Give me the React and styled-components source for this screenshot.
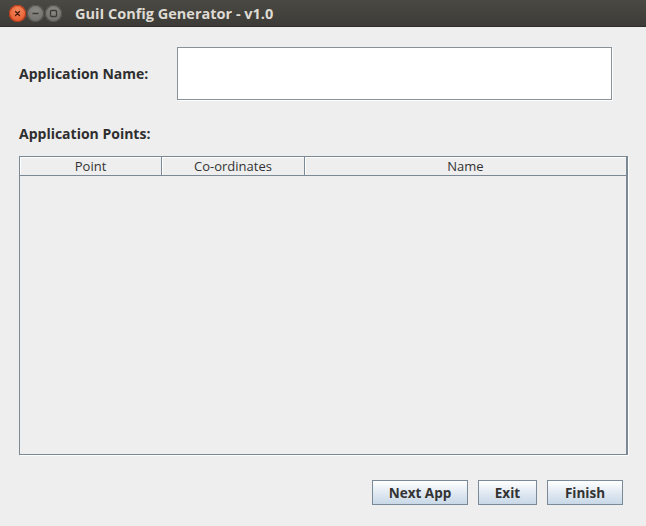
import React from 'react';
import styled, { createGlobalStyle } from 'styled-components';

const GlobalStyle = createGlobalStyle`
    html, body {
        margin: 0;
        padding: 0;
        background: #eeeeee;
    }
    body {
        font-family: "Open Sans", "DejaVu Sans", sans-serif;
    }
`

const Window = styled.div`
    width: 646px;
    height: 526px;
    display: flex;
    flex-direction: column;
    background: #eeeeee;
    overflow: hidden;
`

const TitleBar = styled.div`
    height: 26px;
    display: flex;
    align-items: center;
    padding-left: 9px;
    background: linear-gradient(#4a4944, #3c3b37);
    border-bottom: 1px solid #2f2e2b;
`

const Controls = styled.div`
    display: flex;
    gap: 1px;
    margin-right: 13px;
`

const WinButton = styled.div`
    width: 17px;
    height: 17px;
    border-radius: 50%;
    display: flex;
    align-items: center;
    justify-content: center;
    background: ${p => p.close
        ? 'radial-gradient(circle at 50% 35%, #f58a5d, #e0491f)'
        : 'radial-gradient(circle at 50% 35%, #8c8a84, #6a6863)'};
    box-shadow: inset 0 0 0 1px ${p => p.close ? '#b33b18' : '#55534e'};
`

const Title = styled.div`
    color: #dfdbd2;
    font-weight: bold;
    font-size: 14.5px;
`

const Body = styled.div`
    flex: 1;
    display: flex;
    flex-direction: column;
    padding: 20px 18px 0 19px;
`

const FieldRow = styled.div`
    display: flex;
    align-items: center;
    height: 53px;
`

const Label = styled.div`
    width: ${p => p.width || 'auto'};
    font-size: 14px;
    font-weight: bold;
    color: #2e2e2e;
`

const TextField = styled.input`
    width: 435px;
    height: 53px;
    box-sizing: border-box;
    border: 1px solid #8a9299;
    box-shadow: 1px 1px 0 #ffffff;
    background: #fff;
    outline: none;
    padding: 0 6px;
    font-size: 13px;
`

const SectionLabel = styled(Label)`
    margin-top: 25px;
    line-height: 17px;
`

const Table = styled.div`
    margin-top: 14px;
    width: 609px;
    height: 299px;
    box-sizing: border-box;
    border: 1px solid #7b8896;
    border-right-width: 2px;
    box-shadow: 1px 1px 0 #ffffff;
    display: flex;
    flex-direction: column;
`

const HeaderRow = styled.div`
    display: grid;
    grid-template-columns: 142px 143px 1fr;
    height: 19px;
    box-sizing: border-box;
    border-bottom: 1px solid #7b8896;
`

const HeaderCell = styled.div`
    display: flex;
    align-items: center;
    justify-content: center;
    font-size: 13px;
    color: #333;
    box-shadow: inset 1px 1px 0 #ffffff;
    border-right: ${p => p.last ? 'none' : '1px solid #7b8896'};
`

const Footer = styled.div`
    display: flex;
    justify-content: flex-end;
    gap: 10px;
    margin-top: 25px;
    padding-right: 5px;
`

const Button = styled.button`
    width: ${p => p.width}px;
    height: 25px;
    box-sizing: border-box;
    border: 1px solid #7a8a99;
    border-radius: 0;
    background: linear-gradient(#ffffff, #dfe8f1 55%, #c9d8e7);
    font-family: "Open Sans", "DejaVu Sans", sans-serif;
    font-size: 13.5px;
    font-weight: bold;
    color: #333;
    padding: 0;
    cursor: pointer;
`

const CloseIcon = () => (
    <svg width="7" height="7" viewBox="0 0 7 7">
        <path d="M1.5 1.5L5.5 5.5M5.5 1.5L1.5 5.5" stroke="#4a1a0c" strokeWidth="1.3" strokeLinecap="round" />
    </svg>
)

const MinIcon = () => (
    <svg width="9" height="9" viewBox="0 0 9 9">
        <path d="M1.5 4.5H7.5" stroke="#3c3b37" strokeWidth="1.5" />
    </svg>
)

const MaxIcon = () => (
    <svg width="9" height="9" viewBox="0 0 9 9">
        <rect x="1.5" y="1.5" width="6" height="6" rx="1" fill="none" stroke="#3c3b37" strokeWidth="1.3" />
    </svg>
)

const App = () => {
    const columns = ['Point', 'Co-ordinates', 'Name']
    return (
        <Window>
            <GlobalStyle />
            <TitleBar>
                <Controls>
                    <WinButton close><CloseIcon /></WinButton>
                    <WinButton><MinIcon /></WinButton>
                    <WinButton><MaxIcon /></WinButton>
                </Controls>
                <Title>GuiI Config Generator - v1.0</Title>
            </TitleBar>
            <Body>
                <FieldRow>
                    <Label width="158px">Application Name:</Label>
                    <TextField type="text" />
                </FieldRow>
                <SectionLabel>Application Points:</SectionLabel>
                <Table>
                    <HeaderRow>
                        {columns.map((c, i) => (
                            <HeaderCell key={c} last={i === columns.length - 1}>{c}</HeaderCell>
                        ))}
                    </HeaderRow>
                </Table>
                <Footer>
                    <Button width={96}>Next App</Button>
                    <Button width={59}>Exit</Button>
                    <Button width={76}>Finish</Button>
                </Footer>
            </Body>
        </Window>
    )
}

export default App;
